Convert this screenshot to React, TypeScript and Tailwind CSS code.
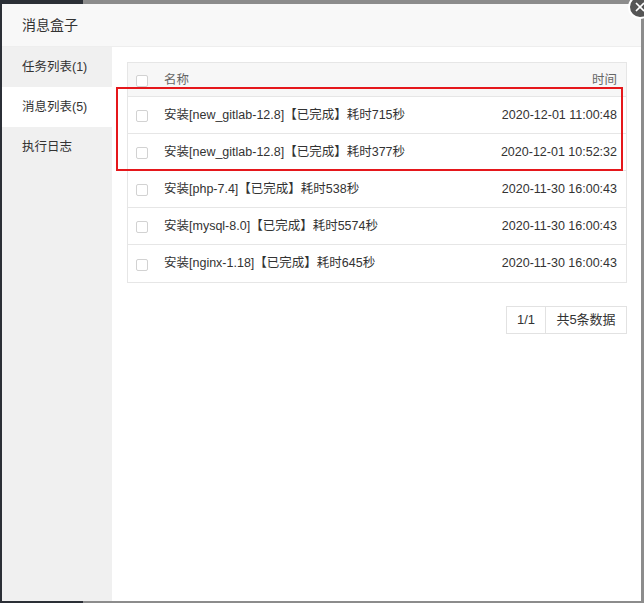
import { X } from "lucide-react";

const tabs = [
  { label: "任务列表(1)", active: false },
  { label: "消息列表(5)", active: true },
  { label: "执行日志", active: false },
];

const rows = [
  { name: "安装[new_gitlab-12.8]【已完成】耗时715秒", time: "2020-12-01 11:00:48" },
  { name: "安装[new_gitlab-12.8]【已完成】耗时377秒", time: "2020-12-01 10:52:32" },
  { name: "安装[php-7.4]【已完成】耗时538秒", time: "2020-11-30 16:00:43" },
  { name: "安装[mysql-8.0]【已完成】耗时5574秒", time: "2020-11-30 16:00:43" },
  { name: "安装[nginx-1.18]【已完成】耗时645秒", time: "2020-11-30 16:00:43" },
];

function Checkbox() {
  return <span className="block h-[12px] w-[12px] rounded-[2px] border border-[#d2d2d2] bg-white" />;
}

export default function App() {
  return (
    <div
      className="flex h-[603px] w-[644px] overflow-hidden bg-[linear-gradient(to_right,#2b2f36_83px,#8c8c8c_83px)] pb-[2px] pl-[2px] pr-[3px] pt-[4px] text-[#333]"
      style={{ fontFamily: '"Liberation Sans", "Noto Sans CJK SC", sans-serif' }}
    >
      <div className="relative flex flex-1 flex-col bg-white">
        {/* close button */}
        <div className="absolute right-[-11px] top-[-9px] flex h-[24px] w-[24px] items-center justify-center rounded-full border-2 border-white bg-[#555]">
          <X size={14} strokeWidth={3} color="#fff" />
        </div>

        <div className="flex h-[43px] items-center border-b border-[#eee] bg-[#f8f8f8] pl-5 text-[14px]">
          消息盒子
        </div>

        <div className="flex flex-1">
          <div className="flex w-[110px] flex-col bg-[#f0f0f0]">
            {tabs.map((t) => (
              <div
                key={t.label}
                className={`flex h-10 items-center pl-5 text-[12.5px] ${t.active ? "bg-white" : ""}`}
              >
                {t.label}
              </div>
            ))}
          </div>

          <div className="flex flex-1 flex-col pl-[15px] pr-[14px] pt-[15px]">
            <div className="relative border border-[#e6e6e6] text-[12.5px]">
              <div className="flex h-[34px] items-center border-b border-[#e6e6e6] bg-[#f7f7f7] pr-[9px] text-[#666]">
                <div className="w-[36px] pl-[8px] pt-[2px]">
                  <Checkbox />
                </div>
                <div className="flex-1 pt-[2px]">名称</div>
                <div className="pt-[2px]">时间</div>
              </div>
              {rows.map((r, i) => (
                <div
                  key={i}
                  className={`flex h-[37px] items-center pr-[9px] ${i < rows.length - 1 ? "border-b border-[#e6e6e6]" : ""}`}
                >
                  <div className="w-[36px] pl-[8px] pt-[2px]">
                    <Checkbox />
                  </div>
                  <div className="flex-1">{r.name}</div>
                  <div>{r.time}</div>
                </div>
              ))}
              {/* highlight box */}
              <div className="absolute left-[-12px] top-[24px] h-[84px] w-[507px] border-2 border-[#e5171b]" />
            </div>

            <div className="mt-[23px] flex justify-end">
              <div className="flex h-[28px] border border-[#e2e2e2] text-[13px]">
                <div className="flex w-[39px] items-center justify-center border-r border-[#e2e2e2]">1/1</div>
                <div className="flex w-[80px] items-center justify-center">共5条数据</div>
              </div>
            </div>
          </div>
        </div>
      </div>
    </div>
  );
}
